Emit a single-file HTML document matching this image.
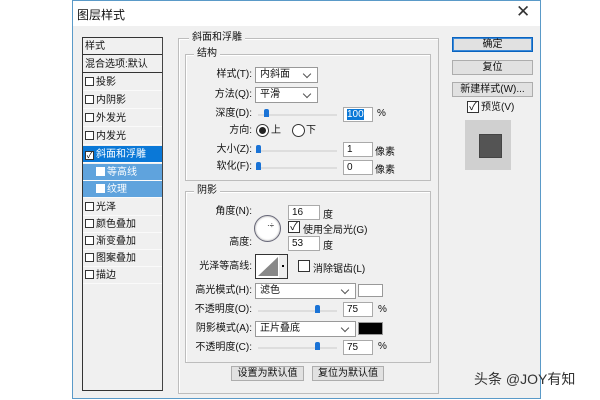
<!DOCTYPE html><html><head><meta charset="utf-8"><style>
*{box-sizing:border-box;margin:0;padding:0}
body{width:600px;height:400px;background:#fff;position:relative;overflow:hidden;font-family:"Liberation Sans","Noto Sans CJK SC",sans-serif;font-size:10px;color:#111}
.a{position:absolute}
.dlg{left:72px;top:0;width:469px;height:399px;background:#f0f0f0;border:1px solid #5a9ac8}
.title{left:73px;top:1px;width:467px;height:25px;background:#fff}
.list{left:82px;top:37px;width:81px;height:354px;border:1px solid #333;border-right-color:#444;background:#f0f0f0}
.it{position:absolute;left:0;width:79px;height:17px;line-height:17px;border-bottom:1px solid #fafafa;padding-left:2px;white-space:nowrap}
.cb{display:inline-block;width:9px;height:9px;border:1px solid #333;background:#fff;vertical-align:-1px;margin-right:2px}
.fs{border:1px solid #bdbdbd;box-shadow:inset 1px 1px 0 #fff}
.lg{position:absolute;background:#f0f0f0;padding:0 3px;line-height:12px}
.lbl{position:absolute;text-align:right;line-height:14px;white-space:nowrap}
.sel{position:absolute;background:#fff;border:1px solid #999;height:16px;line-height:14px;padding-left:4px}
.sel:after{content:"";position:absolute;right:7px;top:3px;width:5px;height:5px;border-right:1px solid #555;border-bottom:1px solid #555;transform:rotate(45deg)}
.inp{position:absolute;background:#fff;border:1px solid #aaa;height:15px;line-height:13px;padding-left:3px;width:30px}
.trk{position:absolute;height:2px;background:#ddd;width:79px}
.th{position:absolute;width:5px;height:8px;background:#1a73d6;border-radius:2px 2px 0 0}
.btn{position:absolute;background:#e1e1e1;border:1px solid #adadad;text-align:center;line-height:13px;height:15px}
</style></head><body>
<div class="a dlg"></div><div class="a title"></div>
<div class="a" style="left:77px;top:6px;font-size:12px">图层样式</div>
<div class="a" style="left:516px;top:2px;font-size:17px;color:#333">✕</div>
<div class="a list">
<div class="it" style="top:0;border-bottom:1px solid #333">样式</div>
<div class="it" style="top:18px;border-bottom:1px solid #333">混合选项:默认</div>
<div class="it" style="top:36px"><span class="cb"></span>投影</div>
<div class="it" style="top:54px"><span class="cb"></span>内阴影</div>
<div class="it" style="top:72px"><span class="cb"></span>外发光</div>
<div class="it" style="top:90px"><span class="cb"></span>内发光</div>
<div class="it" style="top:108px;background:#0a78d7;color:#fff"><span class="cb" style="font-size:8px;line-height:7px;text-align:center;color:#000">✓</span>斜面和浮雕</div>
<div class="it" style="top:126px;background:#5fa3dd;color:#fff;padding-left:13px"><span class="cb" style="border-color:#fff"></span>等高线</div>
<div class="it" style="top:143px;background:#5fa3dd;color:#fff;padding-left:13px"><span class="cb" style="border-color:#fff"></span>纹理</div>
<div class="it" style="top:161px"><span class="cb"></span>光泽</div>
<div class="it" style="top:178px"><span class="cb"></span>颜色叠加</div>
<div class="it" style="top:195px"><span class="cb"></span>渐变叠加</div>
<div class="it" style="top:212px"><span class="cb"></span>图案叠加</div>
<div class="it" style="top:229px"><span class="cb"></span>描边</div>
</div>
<div class="a fs" style="left:178px;top:38px;width:261px;height:356px"></div>
<div class="lg" style="left:189px;top:32px">斜面和浮雕</div>
<div class="a fs" style="left:185px;top:54px;width:246px;height:127px"></div>
<div class="lg" style="left:194px;top:48px">结构</div>
<div class="lbl" style="left:190px;width:62px;top:68px">样式(T):</div>
<div class="sel" style="left:255px;top:67px;width:63px">内斜面</div>
<div class="lbl" style="left:190px;width:62px;top:88px">方法(Q):</div>
<div class="sel" style="left:255px;top:87px;width:63px">平滑</div>
<div class="lbl" style="left:190px;width:62px;top:107px">深度(D):</div>
<div class="trk" style="left:258px;top:114px"></div><div class="th" style="left:264px;top:109px"></div>
<div class="inp" style="left:343px;top:107px"><span style="background:#0a78d7;color:#fff">100</span></div>
<div class="a" style="left:377px;top:108px">%</div>
<div class="lbl" style="left:190px;width:62px;top:124px">方向:</div>
<div class="a" style="left:256px;top:124px;width:13px;height:13px;border:1px solid #333;border-radius:50%;background:#fff"><div class="a" style="left:2px;top:2px;width:7px;height:7px;border-radius:50%;background:#222"></div></div>
<div class="a" style="left:271px;top:124px;line-height:14px">上</div>
<div class="a" style="left:292px;top:124px;width:13px;height:13px;border:1px solid #333;border-radius:50%;background:#fff"></div>
<div class="a" style="left:306px;top:124px;line-height:14px">下</div>
<div class="lbl" style="left:190px;width:62px;top:143px">大小(Z):</div>
<div class="trk" style="left:258px;top:150px"></div><div class="th" style="left:256px;top:145px"></div>
<div class="inp" style="left:343px;top:142px">1</div><div class="a" style="left:375px;top:143px">像素</div>
<div class="lbl" style="left:190px;width:62px;top:160px">软化(F):</div>
<div class="trk" style="left:258px;top:167px"></div><div class="th" style="left:256px;top:162px"></div>
<div class="inp" style="left:343px;top:160px">0</div><div class="a" style="left:375px;top:161px">像素</div>

<div class="a fs" style="left:185px;top:191px;width:246px;height:172px"></div>
<div class="lg" style="left:194px;top:185px">阴影</div>
<div class="lbl" style="left:190px;width:62px;top:205px">角度(N):</div>
<div class="a" style="left:254px;top:215px;width:27px;height:27px;border:1px solid #667;border-radius:50%;background:#fff;box-shadow:inset 0 0 2px #999"></div>
<div class="a" style="left:267px;top:221px;font-size:8px">·÷</div>
<div class="inp" style="left:288px;top:205px;width:32px">16</div><div class="a" style="left:323px;top:206px">度</div>
<div class="a" style="left:288px;top:221px;width:12px;height:12px;border:1px solid #333;background:#fff;font-size:11px;line-height:10px;text-align:center">✓</div>
<div class="a" style="left:303px;top:221px">使用全局光(G)</div>
<div class="lbl" style="left:190px;width:62px;top:236px">高度:</div>
<div class="inp" style="left:288px;top:236px;width:32px">53</div><div class="a" style="left:323px;top:237px">度</div>
<div class="lbl" style="left:185px;width:67px;top:260px">光泽等高线:</div>
<div class="a" style="left:255px;top:254px;width:33px;height:25px;border:1px solid #333;background:#fff"><svg width="31" height="23" style="position:absolute;left:0;top:0"><polygon points="2,21 22,2 22,21" fill="#888"/><rect x="23" y="0" width="8" height="23" fill="#eee"/><rect x="26" y="10" width="2" height="2" fill="#000"/></svg></div>
<div class="a" style="left:298px;top:260px;width:12px;height:12px;border:1px solid #333;background:#fff"></div>
<div class="a" style="left:313px;top:260px">消除锯齿(L)</div>
<div class="lbl" style="left:186px;width:66px;top:284px">高光模式(H):</div>
<div class="sel" style="left:255px;top:283px;width:101px">滤色</div>
<div class="a" style="left:358px;top:284px;width:25px;height:13px;border:1px solid #999;background:#fff"></div>
<div class="lbl" style="left:186px;width:66px;top:303px">不透明度(O):</div>
<div class="trk" style="left:258px;top:310px"></div><div class="th" style="left:315px;top:305px"></div>
<div class="inp" style="left:343px;top:302px">75</div><div class="a" style="left:378px;top:304px">%</div>
<div class="lbl" style="left:186px;width:66px;top:322px">阴影模式(A):</div>
<div class="sel" style="left:255px;top:321px;width:101px">正片叠底</div>
<div class="a" style="left:358px;top:322px;width:25px;height:13px;border:1px solid #999;background:#000"></div>
<div class="lbl" style="left:186px;width:66px;top:341px">不透明度(C):</div>
<div class="trk" style="left:258px;top:347px"></div><div class="th" style="left:315px;top:342px"></div>
<div class="inp" style="left:343px;top:340px">75</div><div class="a" style="left:378px;top:341px">%</div>
<div class="btn" style="left:231px;top:366px;width:73px">设置为默认值</div>
<div class="btn" style="left:312px;top:366px;width:72px">复位为默认值</div>

<div class="btn" style="left:452px;top:37px;width:81px;border:1px solid #0a64c0;box-shadow:inset 0 0 0 1px #3c8ad8">确定</div>
<div class="btn" style="left:452px;top:60px;width:81px">复位</div>
<div class="btn" style="left:452px;top:82px;width:81px">新建样式(W)...</div>
<div class="a" style="left:467px;top:101px;width:12px;height:12px;border:1px solid #333;background:#fff;font-size:11px;line-height:10px;text-align:center">✓</div>
<div class="a" style="left:481px;top:101px;line-height:13px">预览(V)</div>
<div class="a" style="left:465px;top:120px;width:46px;height:50px;background:#d0d0d0"><div class="a" style="left:14px;top:14px;width:23px;height:24px;background:#545454;box-shadow:inset 0 0 0 1px #444"></div></div>
<div class="a" style="left:474px;top:369px;font-size:14px;color:#333">头条 @JOY有知</div>
</body></html>
